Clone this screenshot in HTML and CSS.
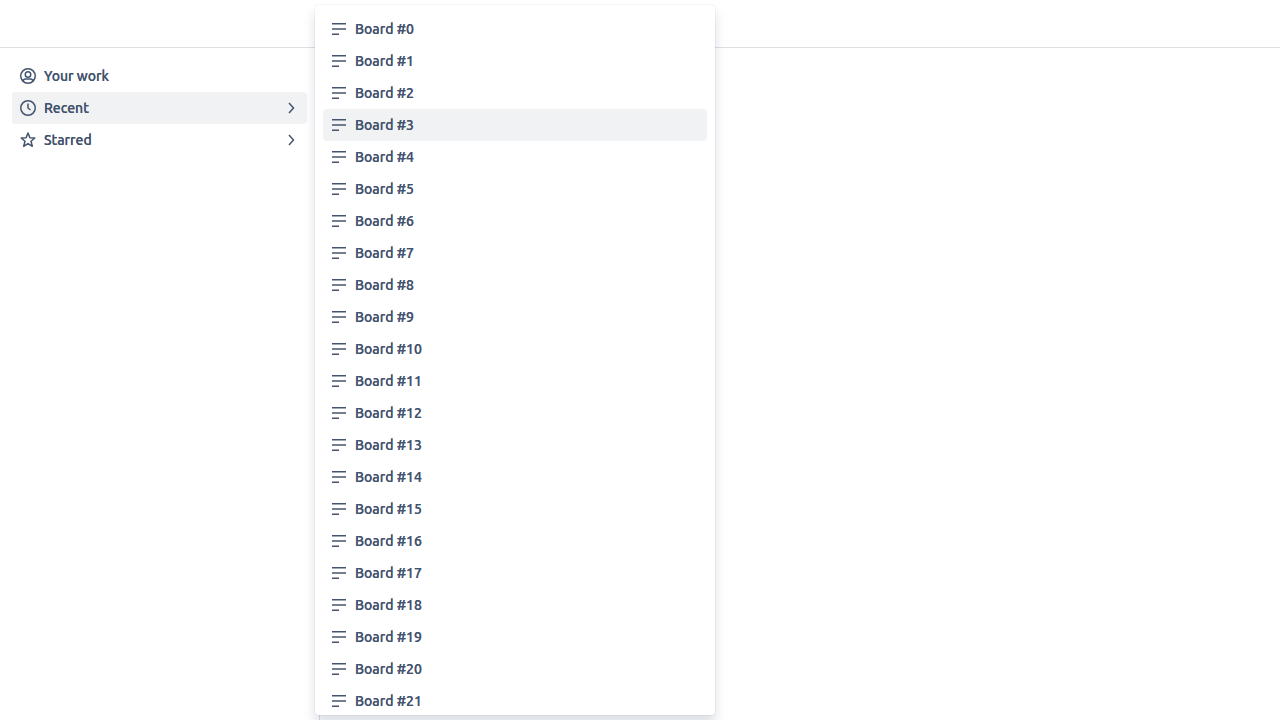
FILE: index.html
```
<!DOCTYPE html>
<html lang="en">
<head>
<meta charset="utf-8">
<meta name="viewport" content="width=device-width, initial-scale=1">
<title>Boards</title>
<link rel="stylesheet" href="styles.css">
</head>
<body>
<svg class="sprite" aria-hidden="true">
  <symbol id="icon-person" viewBox="0 0 16 16">
    <g fill="none" stroke="currentColor" stroke-width="1.5">
      <circle cx="8" cy="8" r="7.25"/>
      <circle cx="8" cy="6.5" r="2.75"/>
      <path d="M3.3 13.4V13c0-1.2.9-2.1 2.1-2.1h5.2c1.2 0 2.1.9 2.1 2.1v.4"/>
    </g>
  </symbol>
  <symbol id="icon-clock" viewBox="0 0 16 16">
    <g fill="none" stroke="currentColor" stroke-width="1.5">
      <circle cx="8" cy="8" r="7.25"/>
      <path d="M8 3.5V8l2.5 2"/>
    </g>
  </symbol>
  <symbol id="icon-star" viewBox="0 0 16 16">
    <path fill="none" stroke="currentColor" stroke-width="1.5" stroke-linejoin="round" d="M8 1l1.900 4.700 4.900.300-3.800 3.200 1.300 5.100L8 11.600l-4.300 2.700L5 9.200 1.200 6l4.900-.300z"/>
  </symbol>
  <symbol id="icon-chevron" viewBox="0 0 16 16">
    <path fill="none" stroke="currentColor" stroke-width="1.5" d="M6 3l4.500 5L6 13"/>
  </symbol>
  <symbol id="icon-lines" viewBox="0 0 16 16">
    <path fill="currentColor" d="M1 2h14v1.500H1zM1 7.250h14v1.500H1zM1 12.500h7V14H1z"/>
  </symbol>
</svg>

<header class="top-bar"></header>
<div class="layout">
  <nav class="side-nav" aria-label="Main">
    <a class="item" href="#work"><svg class="icon"><use href="#icon-person"/></svg><span class="label">Your work</span></a>
    <button class="item item-active" type="button" aria-haspopup="true" aria-expanded="true"><svg class="icon"><use href="#icon-clock"/></svg><span class="label">Recent</span><svg class="icon"><use href="#icon-chevron"/></svg></button>
    <button class="item" type="button" aria-haspopup="true"><svg class="icon"><use href="#icon-star"/></svg><span class="label">Starred</span><svg class="icon"><use href="#icon-chevron"/></svg></button>
  </nav>
  <main class="content"></main>
</div>

<div class="flyout" id="boards"></div>
<script src="script.js"></script>
</body>
</html>
```
FILE: styles.css
```
* {
  box-sizing: border-box;
}

body {
  margin: 0;
  min-height: 100vh;
  display: flex;
  flex-direction: column;
  background: #fff;
  color: #44546f;
  font-family: Ubuntu, "Noto Sans", "Open Sans", sans-serif;
  font-size: 14px;
  font-weight: 500;
  line-height: 20px;
}

.sprite {
  display: none;
}

.top-bar {
  height: 48px;
  border-bottom: 1px solid #dcdfe4;
}

.layout {
  flex: 1;
  display: flex;
}

.side-nav {
  width: 320px;
  padding: 12px;
  border-right: 1px solid #dcdfe4;
}

.content {
  flex: 1;
}

.item {
  display: flex;
  align-items: center;
  gap: 8px;
  width: 100%;
  min-height: 32px;
  padding: 0 8px;
  border: 0;
  border-radius: 4px;
  background: none;
  color: inherit;
  font: inherit;
  text-align: left;
  text-decoration: none;
  cursor: pointer;
}

.item:hover,
.item-active {
  background: #f1f2f4;
}

.label {
  flex: 1;
  text-shadow: 0 0 0 currentColor;
}

.icon {
  flex: none;
  width: 16px;
  height: 16px;
}

.flyout {
  position: absolute;
  top: 5px;
  left: 315px;
  width: 400px;
  max-height: calc(100vh - 10px);
  padding: 8px;
  overflow-y: auto;
  scrollbar-width: none;
  border-radius: 4px;
  background: #fff;
  box-shadow: 0 8px 12px rgba(9, 30, 66, 0.15), 0 0 1px rgba(9, 30, 66, 0.31);
}
```
FILE: script.js
```
const boardCount = 22;
const activeBoard = 3;
const flyout = document.getElementById("boards");

for (let i = 0; i < boardCount; i += 1) {
  const state = i === activeBoard ? " item-active" : "";
  flyout.insertAdjacentHTML(
    "beforeend",
    `<a class="item${state}" href="#board-${i}"><svg class="icon"><use href="#icon-lines"/></svg><span class="label">Board #${i}</span></a>`
  );
}
```
